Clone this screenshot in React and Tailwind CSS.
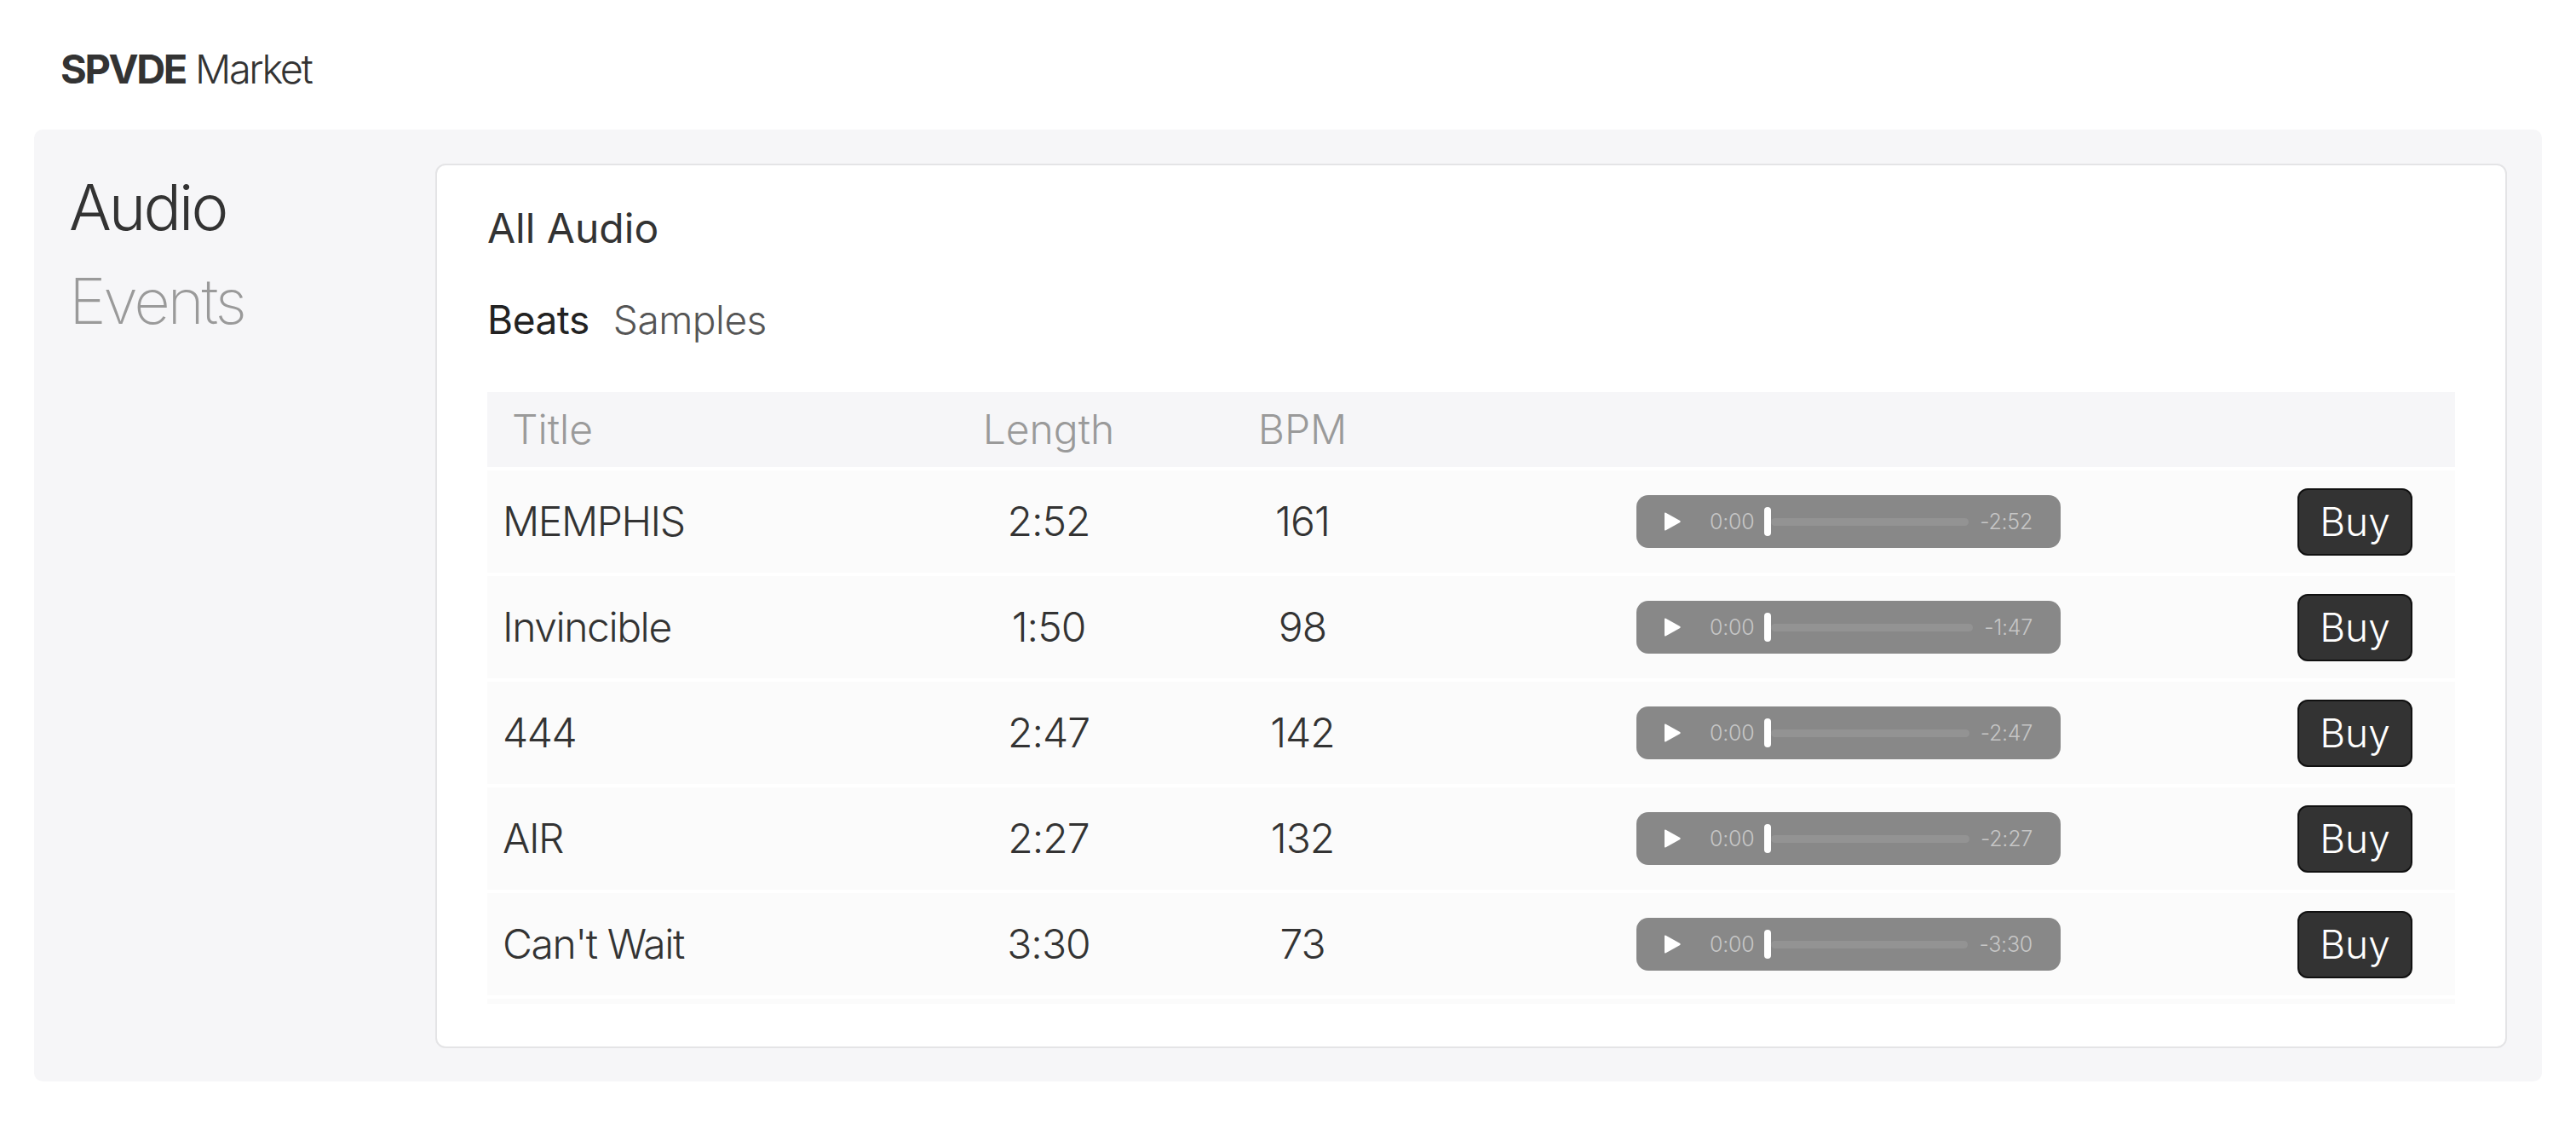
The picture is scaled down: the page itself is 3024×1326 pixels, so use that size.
import React from "react";

const rows = [
  { title: "MEMPHIS", length: "2:52", bpm: "161", remain: "-2:52" },
  { title: "Invincible", length: "1:50", bpm: "98", remain: "-1:47" },
  { title: "444", length: "2:47", bpm: "142", remain: "-2:47" },
  { title: "AIR", length: "2:27", bpm: "132", remain: "-2:27" },
  { title: "Can't Wait", length: "3:30", bpm: "73", remain: "-3:30" },
];

function Player({ remain }) {
  return (
    <div className="w-[498px] h-[62px] rounded-[14px] bg-[#888888] flex items-center pl-[31px] pr-[33px]">
      <svg width="22" height="24" viewBox="0 0 22 24" className="shrink-0">
        <path d="M2 2.5 Q2 0.8 3.6 1.7 L20.2 11 Q21.4 12 20.2 13 L3.6 22.3 Q2 23.2 2 21.5 Z" fill="#ffffff" />
      </svg>
      <span className="ml-[33px] text-[25px] leading-none text-[#c6c6c6] tracking-[-0.01em]">0:00</span>
      <div className="ml-[12px] w-[8px] h-[34px] rounded-full bg-white shrink-0" />
      <div className="flex-1 h-[9px] rounded-full bg-[#939393]" />
      <span className="ml-[13px] text-[25px] leading-none text-[#c6c6c6] tracking-[-0.01em]">{remain}</span>
    </div>
  );
}

export default function App() {
  return (
    <div className="min-h-screen bg-white font-['Inter',sans-serif] text-[#333333]">
      <header className="pt-[52px] pl-[71px] h-[152px]">
        <div className="text-[47px] leading-[58px] tracking-[-0.05em]">
          <span className="font-bold">SPVDE</span>{" "}
          <span className="font-light">Market</span>
        </div>
      </header>

      <div className="mx-[40px] rounded-[10px] bg-[#f6f6f8] flex pt-[40px] pr-[41px] pb-[39px]">
        <aside className="w-[471px] shrink-0 pl-[41px] pt-[6px] flex flex-col gap-[20px]">
          <div className="text-[74px] leading-[90px] font-light text-[#333333] tracking-[-0.04em]">Audio</div>
          <div className="text-[74px] leading-[90px] font-extralight text-[#9a9a9a] tracking-[-0.045em]">Events</div>
        </aside>

        <main className="flex-1 bg-white border-2 border-[#e4e4e6] rounded-[12px] pt-[45px] px-[59px] pb-[50px]">
          <h1 className="text-[48px] leading-[58px] font-normal text-[#333333]">All Audio</h1>
          <div className="mt-[49px] flex gap-[28px] text-[46px] leading-[58px] tracking-[-0.01em]">
            <span className="font-normal text-[#222222]">Beats</span>
            <span className="font-light text-[#555555]">Samples</span>
          </div>

          <div className="mt-[56px] flex flex-col gap-[4px]">
            <div className="grid grid-cols-[559px_200px_396px_886px_1fr] h-[88px] items-center bg-[#f6f6f8] text-[48px] font-light text-[#9a9a9a]">
              <div className="pl-[29px]">Title</div>
              <div className="text-center">Length</div>
              <div className="text-center">BPM</div>
              <div />
              <div />
            </div>
            {rows.map((r) => (
              <div
                key={r.title}
                className="grid grid-cols-[559px_200px_396px_886px_1fr] h-[120px] items-center bg-[#fbfbfb] text-[48px] font-light text-[#333333]"
              >
                <div className="pl-[18px] tracking-[-0.03em]">{r.title}</div>
                <div className="text-center tracking-[-0.02em]">{r.length}</div>
                <div className="text-center tracking-[-0.02em]">{r.bpm}</div>
                <div className="flex justify-center">
                  <Player remain={r.remain} />
                </div>
                <div className="pl-[84px]">
                  <button className="w-[135px] h-[79px] rounded-[12px] bg-[#333333] border-2 border-[#111111] text-white text-[46px] font-light leading-none">
                    Buy
                  </button>
                </div>
              </div>
            ))}
            <div className="h-[6px] bg-[#fbfbfb]" />
          </div>
        </main>
      </div>
    </div>
  );
}
